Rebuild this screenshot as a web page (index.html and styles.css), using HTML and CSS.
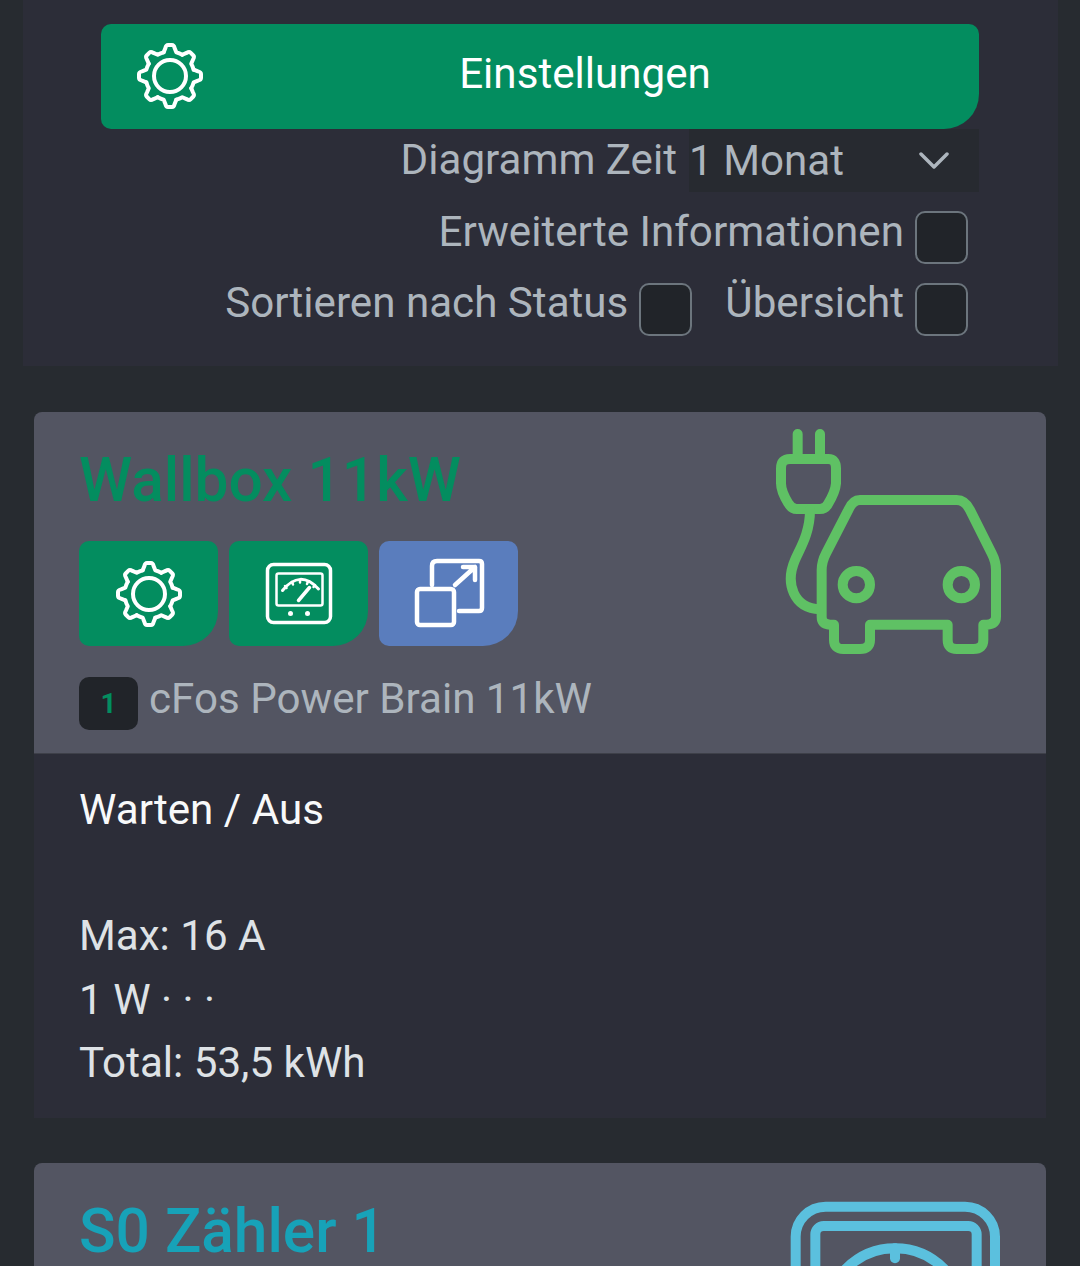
FILE: index.html
```html
<!DOCTYPE html>
<html>
<head>
    <title>Wallbox</title>
    <link rel="stylesheet" href="styles.css">
</head>
<body>
    <svg class="defs" width="0" height="0">
        <symbol id="gear" viewBox="-34 -34 68 68">
            <g fill="none" stroke="currentColor" stroke-width="4" stroke-linecap="round" stroke-linejoin="round">
                <circle r="16"></circle>
                <path id="tooth" d="M-6.3 -23.7 L-4.6 -28 Q-3.9 -31 -2 -31 H2 Q3.9 -31 4.6 -28 L6.3 -23.7 A24.5 24.5 0 0 1 12.25 -21.2"></path>
                <use href="#tooth" transform="rotate(45)"></use>
                <use href="#tooth" transform="rotate(90)"></use>
                <use href="#tooth" transform="rotate(135)"></use>
                <use href="#tooth" transform="rotate(180)"></use>
                <use href="#tooth" transform="rotate(225)"></use>
                <use href="#tooth" transform="rotate(270)"></use>
                <use href="#tooth" transform="rotate(315)"></use>
            </g>
        </symbol>
    </svg>

    <div class="container">
        <div class="panel">
            <div class="settings-button">
                <svg class="settings-gear" width="68" height="68"><use href="#gear"></use></svg>
                <span class="settings-text">Einstellungen</span>
            </div>
            <div class="row row-select">
                <span>Diagramm Zeit</span>
                <div class="select">
                    <span>1 Monat</span>
                    <svg width="30" height="20" viewBox="0 0 30 20"><path d="M2 3 L15 16 L28 3" fill="none" stroke="#adb5bd" stroke-width="3.5" stroke-linecap="round" stroke-linejoin="round"></path></svg>
                </div>
            </div>
            <div class="row">
                <span>Erweiterte Informationen</span>
                <span class="check"></span>
            </div>
            <div class="row row-last">
                <span>Sortieren nach Status</span>
                <span class="check"></span>
                <span class="overview-label">Übersicht</span>
                <span class="check"></span>
            </div>
        </div>

        <div class="card">
            <div class="card-header">
                <div class="card-left">
                    <h2 class="title title-green">Wallbox 11kW</h2>
                    <div class="icon-buttons">
                        <div class="icon-button"><svg width="68" height="68"><use href="#gear"></use></svg></div>
                        <div class="icon-button">
                            <svg width="72" height="68" viewBox="0 0 72 68" fill="none" stroke="#fff" stroke-linecap="round" stroke-linejoin="round">
                                <rect x="4.5" y="4.5" width="63" height="58" rx="6" stroke-width="3.5"></rect>
                                <rect x="13.5" y="13.5" width="46" height="32" rx="2" stroke-width="2.5"></rect>
                                <path d="M19.5 30.5 Q37 9 55.5 29" stroke-width="3"></path>
                                <path d="M35.5 40.5 L46.5 27.5" stroke-width="3.5"></path>
                                <path d="M22 26 l1.5 2 M29 22 l1 2.5 M37 20 v2.5 M45 21.5 l-1 2.5 M52 25 l-1.5 2" stroke-width="2.5"></path>
                                <circle cx="27.5" cy="53.5" r="2.5" fill="#fff" stroke="none"></circle>
                                <circle cx="44.5" cy="53.5" r="2.5" fill="#fff" stroke="none"></circle>
                            </svg>
                        </div>
                        <div class="icon-button icon-button-blue">
                            <svg width="72" height="72" viewBox="0 0 72 72" fill="none" stroke="#fff" stroke-width="4.5" stroke-linecap="round" stroke-linejoin="round">
                                <rect x="4" y="31" width="37" height="36" rx="3"></rect>
                                <path d="M19 27 V8 Q19 3 24 3 H66 Q69 3 69 6 V50 Q69 53 66 53 H46"></path>
                                <path d="M42 27 L62 9 M50 9 H62 V22"></path>
                            </svg>
                        </div>
                    </div>
                    <div class="device">
                        <span class="badge">1</span>
                        <span>cFos Power Brain 11kW</span>
                    </div>
                </div>
                <svg class="card-icon" width="260" height="250" viewBox="0 0 780 750" fill="none" stroke="#5fc164" stroke-width="30" stroke-linecap="round" stroke-linejoin="round">
                    <path d="M113 42 V110 M180 42 V110"></path>
                    <path d="M90 117 H205 Q228 117 228 145 V190 Q226 215 205 250 Q197 267 180 267 H110 Q95 267 85 250 Q63 215 63 190 V145 Q63 117 90 117 Z"></path>
                    <path d="M150 270 C150 340 120 385 105 420 C75 490 100 565 180 568"></path>
                    <path d="M300 240 H590 Q615 240 630 270 L695 400 Q708 425 708 450 V590 Q708 612 680 614 H670 V660 Q670 687 640 687 H590 Q563 687 563 660 V614 H330 V660 Q330 687 300 687 H250 Q222 687 222 660 V614 H210 Q185 612 185 590 V450 Q185 425 198 400 L265 270 Q278 240 300 240 Z"></path>
                    <circle cx="289" cy="494" r="41"></circle>
                    <circle cx="604" cy="494" r="41"></circle>
                </svg>
            </div>
            <div class="card-body">
                <div class="status">Warten / Aus</div>
                <div class="blank"></div>
                <div>Max: 16 A</div>
                <div>1 W · · ·</div>
                <div>Total: 53,5 kWh</div>
            </div>
        </div>

        <div class="card">
            <div class="card-header">
                <div class="card-left">
                    <h2 class="title title-teal">S0 Zähler 1</h2>
                </div>
                <svg class="card-icon" width="260" height="250" viewBox="0 0 780 750" fill="none" stroke="#5bc0de" stroke-width="30" stroke-linecap="round">
                    <rect x="107" y="107" width="598" height="600" rx="90"></rect>
                    <rect x="166" y="165" width="484" height="500" rx="25"></rect>
                    <circle cx="405" cy="439" r="207"></circle>
                    <path d="M405 232 V262"></path>
                </svg>
            </div>
        </div>
    </div>
</body>
</html>
```

FILE: styles.css
```css
html, body {
    height: 100%;
    overflow: hidden;
}
body {
    margin: 0;
    background-color: #272b30;
    font-family: Roboto, "Liberation Sans", sans-serif;
    font-size: 42.15px;
    line-height: 63px;
    color: #adb5bd;
}
.defs {
    display: block;
    height: 0;
}
.container {
    margin: 0 22px 0 23px;
}
.panel {
    background-color: #2c2d38;
    padding: 24px 79px 22px 78px;
    color: #adb5bd;
}
.settings-button {
    position: relative;
    display: flex;
    align-items: center;
    justify-content: center;
    height: 105px;
    background-color: #038d5f;
    border-radius: 10px 10px 35px 10px;
    color: white;
}
.settings-gear {
    position: absolute;
    left: 35px;
    top: 18px;
    color: white;
}
.settings-text {
    margin-left: 90px;
    margin-top: -6px;
}
.row {
    display: flex;
    justify-content: flex-end;
    height: 72px;
    margin-right: 11px;
    white-space: nowrap;
}
.row-select {
    height: 71px;
    margin-right: 0;
    line-height: 61px;
}
.row-last {
    line-height: 61px;
}
.select {
    display: flex;
    justify-content: space-between;
    align-items: center;
    box-sizing: border-box;
    width: 290px;
    height: 63px;
    margin-left: 12px;
    padding-right: 30px;
    background-color: #272a30;
}
.check {
    box-sizing: border-box;
    flex: none;
    width: 53px;
    height: 53px;
    margin: 11px 0 0 11px;
    background-color: #212429;
    border: 2px solid #6c757d;
    border-radius: 10px;
}
.overview-label {
    margin-left: 33px;
}
.card {
    margin: 46px 12px 0 11px;
    border-radius: 8px 8px 0 0;
    overflow: hidden;
}
.card + .card {
    margin-top: 45px;
}
.card-header {
    display: flex;
    justify-content: space-between;
    align-items: flex-start;
    height: 333px;
    padding: 8px 26px 0 45px;
    background-color: #535562;
    border-bottom: 1px solid #3e4049;
}
.card-left {
    padding-top: 25px;
}
.title {
    margin: 0;
    font-size: 60.4px;
    line-height: 72px;
    font-weight: 500;
}
.title-green {
    color: #038d5f;
}
.title-teal {
    color: #17a2b8;
}
.icon-buttons {
    display: flex;
    gap: 11px;
    margin-top: 24px;
}
.icon-button {
    display: flex;
    align-items: center;
    justify-content: center;
    width: 139px;
    height: 105px;
    background-color: #038d5f;
    border-radius: 10px 10px 35px 10px;
    color: white;
}
.icon-button-blue {
    background-color: #5a7dbd;
}
.device {
    display: flex;
    align-items: flex-start;
    gap: 11px;
    margin-top: 31px;
    line-height: 44px;
    white-space: nowrap;
}
.badge {
    width: 59px;
    height: 53px;
    background-color: #212429;
    border-radius: 10px;
    color: #038d5f;
    font-size: 28px;
    font-weight: 700;
    line-height: 53px;
    text-align: center;
}
.card-body {
    padding: 24px 45px;
    background-color: #2c2d38;
    color: #dee2e6;
    line-height: 63.2px;
}
.status {
    color: #f8f9fa;
}
.blank {
    height: 63.2px;
}
```
